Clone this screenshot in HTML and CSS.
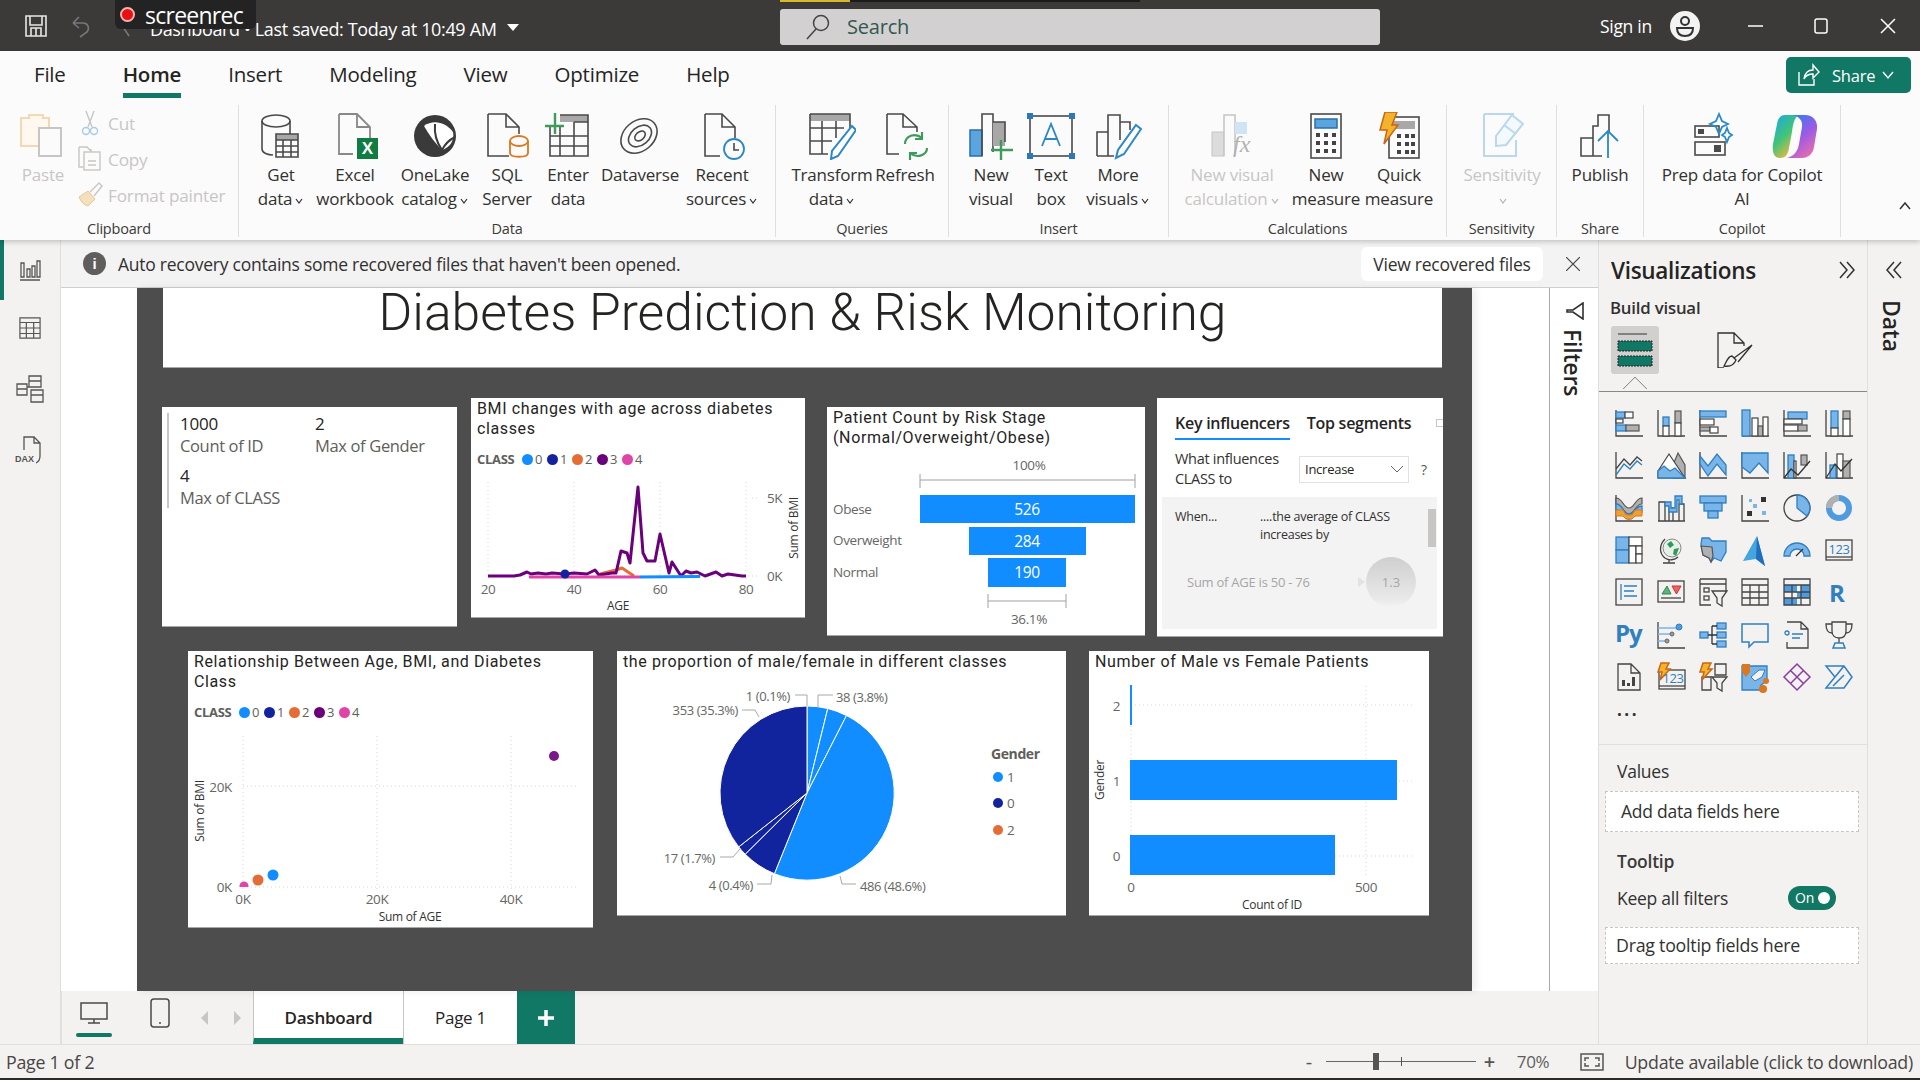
FILE: index.html
```html
<!DOCTYPE html>
<html lang="en">
<head>
<meta charset="utf-8">
<title>Dashboard - Power BI Desktop</title>
<link rel="stylesheet" href="styles.css">
</head>
<body>
<div class="app">
  <header class="titlebar">
    <div class="tb-left">
      <svg class="tb-save" viewBox="0 0 24 24"><path d="M2 2H22V22H2ZM6 2V11H18V2M7 22V14H17V22M12 14V22"/></svg>
      <svg class="tb-undo" viewBox="0 0 20 24"><path d="M2 9L8 3M2 9L8 14M2 9H12C17 9 19 14 16 18L9 23"/></svg>
      <svg class="tb-back" viewBox="0 0 16 24"><path d="M2 4L14 22"/></svg>
      <span class="tb-doc">Dashboard • Last saved: Today at 10:49 AM</span>
      <span class="tb-tri"></span>
    </div>
    <div class="search">
      <svg class="search-ic" viewBox="0 0 26 26"><circle cx="16" cy="9" r="7.5"/><path d="M11 15L2 25"/></svg>
      <span>Search</span>
    </div>
    <div class="tb-right">
      <span class="signin">Sign in</span>
      <svg class="avatar" viewBox="0 0 30 30"><circle class="av-bg" cx="15" cy="15" r="15"/><circle class="av-l" cx="15" cy="10" r="4"/><path class="av-l" d="M7 17H23C23 23 19 25 15 25C11 25 7 23 7 17Z"/></svg>
      <svg class="win-ic win-min" viewBox="0 0 16 16"><path d="M0 8H15"/></svg>
      <svg class="win-ic win-max" viewBox="0 0 16 16"><rect x="2" y="1" width="12" height="14" rx="2"/></svg>
      <svg class="win-ic win-x" viewBox="0 0 16 16"><path d="M1 1L15 15M15 1L1 15"/></svg>
    </div>
    <div class="rec-badge"><span class="rec-dot"></span><span>screenrec</span></div>
    <div class="top-strip"><span class="strip-y"></span><span class="strip-k"></span></div>
  </header>

  <section class="ribbon">
    <nav class="tabs">
      <span class="tab tab-file">File</span>
      <span class="tab tab-on">Home</span>
      <span class="tab">Insert</span>
      <span class="tab">Modeling</span>
      <span class="tab">View</span>
      <span class="tab">Optimize</span>
      <span class="tab">Help</span>
      <button class="share">
        <svg viewBox="0 0 24 24"><path d="M3 9V22H18V16M8 16C9 9 13 7 17 7V2L23 9L17 15V11C13 11 10 12 8 16Z"/></svg>
        <span>Share</span>
        <svg class="share-ch" viewBox="0 0 12 12"><path d="M1 3L6 9L11 3"/></svg>
      </button>
    </nav>
    <div class="groups">
      <div class="group g-clip">
        <div class="btns">
          <div class="rb off w54">
            <svg class="ric" viewBox="0 0 48 48"><path class="pale-o" d="M2 6H10V3H24V6H30V34H2Z"/><rect class="pale-w" x="20" y="16" width="22" height="28"/></svg>
            <span class="rl">Paste</span>
          </div>
          <div class="smalls">
            <div class="sb"><svg viewBox="0 0 26 26"><path class="pale-s" d="M9 1L15 17M17 1L11 17"/><circle class="pale-b" cx="9" cy="21" r="3.5"/><circle class="pale-b" cx="17" cy="21" r="3.5"/></svg><span>Cut</span></div>
            <div class="sb"><svg viewBox="0 0 26 26"><path class="pale-s" d="M2 1H10L14 5V3M2 1V21H6"/><rect class="pale-s" x="7" y="6" width="16" height="18"/><path class="pale-s" d="M11 15H19M11 19H19"/></svg><span>Copy</span></div>
            <div class="sb"><svg viewBox="0 0 26 26"><path class="pale-f" d="M2 15L11 9L18 17L11 24C7 23 4 20 2 15Z"/><path class="pale-s" d="M13 10L22 1L25 4L17 14"/></svg><span>Format painter</span></div>
          </div>
        </div>
        <div class="glabel">Clipboard</div>
      </div>

      <div class="group g-data">
        <div class="btns">
          <div class="rb w72">
            <svg class="ric" viewBox="0 0 48 48"><ellipse class="ln" cx="19" cy="9" rx="14" ry="6"/><path class="ln" d="M5 9V37C5 41 11 43 16 43M33 9V22"/><rect class="gy" x="19" y="22" width="22" height="6"/><path class="ln" d="M19 22H41V45H19ZM19 28H41M19 34H41M19 40H41M26 28V45M34 28V45"/></svg>
            <span class="rl">Get<br>data<svg class="chev" viewBox="0 0 10 10"><path d="M2 3L5 7L8 3"/></svg></span>
          </div>
          <div class="rb w76">
            <svg class="ric" viewBox="0 0 48 48"><path class="ln-g" d="M8 2H26L39 15V28M26 2V15H39M8 2V42H22"/><rect class="xl" x="26" y="26" width="21" height="21"/><text class="xl-t" x="36.500" y="42">X</text></svg>
            <span class="rl">Excel<br>workbook</span>
          </div>
          <div class="rb w84">
            <svg class="ric" viewBox="0 0 48 48"><circle class="dk" cx="24" cy="24" r="21"/><path class="wh" d="M13 14C22 7 35 10 42 20C44 29 38 36 31 38C24 31 18 23 13 14Z"/><path class="dk-l" d="M24 12C23 22 26 31 31 38M31 38C34 32 38 28 44 25"/></svg>
            <span class="rl">OneLake<br>catalog<svg class="chev" viewBox="0 0 10 10"><path d="M2 3L5 7L8 3"/></svg></span>
          </div>
          <div class="rb w60">
            <svg class="ric" viewBox="0 0 48 48"><path class="ln" d="M5 2H23L36 15V22M23 2V15H36M5 2V44H26"/><ellipse class="or" cx="36" cy="29" rx="9" ry="5"/><path class="or" d="M27 29V41C27 46 45 46 45 41V29"/></svg>
            <span class="rl">SQL<br>Server</span>
          </div>
          <div class="rb w62">
            <svg class="ric" viewBox="0 0 48 48"><rect class="gy" x="16" y="3" width="28" height="7"/><path class="ln" d="M6 14V44H44V3H16M6 24H44M6 34H44M16 14V44M30 10V44M30 10H44"/><path class="gr2" d="M1 14H20M11 1V22"/></svg>
            <span class="rl">Enter<br>data</span>
          </div>
          <div class="rb w82">
            <svg class="ric" viewBox="0 0 48 48"><ellipse class="ln" cx="23" cy="24" rx="20" ry="15" transform="rotate(-40 23 24)"/><ellipse class="ln" cx="24" cy="24" rx="13" ry="9" transform="rotate(-40 24 24)"/><ellipse class="ln" cx="24" cy="24" rx="6" ry="4" transform="rotate(-40 24 24)"/></svg>
            <span class="rl">Dataverse</span>
          </div>
          <div class="rb w82">
            <svg class="ric" viewBox="0 0 48 48"><path class="ln" d="M7 2H24L37 15V26M24 2V15H37M7 2V44H22"/><circle class="bl-s" cx="36" cy="37" r="10"/><path class="ln" d="M36 31V38H41"/></svg>
            <span class="rl">Recent<br>sources<svg class="chev" viewBox="0 0 10 10"><path d="M2 3L5 7L8 3"/></svg></span>
          </div>
        </div>
        <div class="glabel">Data</div>
      </div>

      <div class="group g-query">
        <div class="btns">
          <div class="rb w92">
            <svg class="ric" viewBox="0 0 48 48"><rect class="gy" x="2" y="2" width="40" height="7"/><path class="ln" d="M2 2H42V22M2 2V42H20M2 16H36M2 29H24M14 9V42M28 9V26"/><path class="pen" d="M44 14L48 18L30 44L23 47L24 39Z"/></svg>
            <span class="rl">Transform<br>data<svg class="chev" viewBox="0 0 10 10"><path d="M2 3L5 7L8 3"/></svg></span>
          </div>
          <div class="rb w54">
            <svg class="ric" viewBox="0 0 48 48"><path class="ln" d="M6 2H22L36 15V20M22 2V15H36M6 2V42H18"/><path class="gr3" d="M24 32C24 24 34 20 41 26M46 36C46 43 36 47 29 41M41 20V27H34M29 48V41H36"/></svg>
            <span class="rl">Refresh</span>
          </div>
        </div>
        <div class="glabel">Queries</div>
      </div>

      <div class="group g-ins">
        <div class="btns">
          <div class="rb w60">
            <svg class="ric" viewBox="0 0 48 48"><rect class="bl-f" x="3" y="18" width="12" height="26"/><path class="ln" d="M15 44V2H26V40"/><rect class="gy" x="26" y="10" width="12" height="24"/><path class="ln" d="M26 10H38V30"/><path class="gr2" d="M34 28V48M24 38H46"/></svg>
            <span class="rl">New<br>visual</span>
          </div>
          <div class="rb w60">
            <svg class="ric" viewBox="0 0 48 48"><rect class="ln" x="3" y="4" width="42" height="40"/><path class="bl-s2" d="M15 34L24 12L33 34M18 27H30"/><rect class="bl-d" x="0" y="1" width="6" height="6"/><rect class="bl-d" x="42" y="1" width="6" height="6"/><rect class="bl-d" x="0" y="41" width="6" height="6"/><rect class="bl-d" x="42" y="41" width="6" height="6"/></svg>
            <span class="rl">Text<br>box</span>
          </div>
          <div class="rb w74">
            <svg class="ric" viewBox="0 0 48 48"><path class="ln" d="M3 44V20H14M3 44H20M14 44V3H26V28M26 10H36V18"/><path class="pen" d="M42 13L47 17L30 42L22 46L24 38Z"/></svg>
            <span class="rl">More<br>visuals<svg class="chev" viewBox="0 0 10 10"><path d="M2 3L5 7L8 3"/></svg></span>
          </div>
        </div>
        <div class="glabel">Insert</div>
      </div>

      <div class="group g-calc">
        <div class="btns">
          <div class="rb off w110">
            <svg class="ric" viewBox="0 0 48 48"><rect class="pg" x="4" y="20" width="12" height="24"/><path class="pg-l" d="M16 44V3H27V44"/><rect class="pb" x="27" y="10" width="12" height="12"/><text class="fx" x="25" y="40">fx</text></svg>
            <span class="rl">New visual<br>calculation<svg class="chev" viewBox="0 0 10 10"><path d="M2 3L5 7L8 3"/></svg></span>
          </div>
          <div class="rb w78">
            <svg class="ric" viewBox="0 0 48 48"><rect class="ln" x="9" y="2" width="30" height="44"/><rect class="bl-f" x="13" y="7" width="22" height="9"/><path class="dots" d="M14 23H18M22 23H26M30 23H34M14 31H18M22 31H26M30 31H34M14 39H18M22 39H26M30 39H34"/></svg>
            <span class="rl">New<br>measure</span>
          </div>
          <div class="rb w68">
            <svg class="ric" viewBox="0 0 48 48"><rect class="ln" x="14" y="5" width="30" height="41"/><rect class="gy" x="18" y="9" width="22" height="8"/><path class="dots" d="M22 24H26M30 24H34M36 24H40M22 32H26M30 32H34M36 32H40M22 40H26M30 40H34M36 40H40"/><path class="bolt" d="M10 0H22L17 13H23L9 32L12 18H5Z"/></svg>
            <span class="rl">Quick<br>measure</span>
          </div>
        </div>
        <div class="glabel">Calculations</div>
      </div>

      <div class="group g-sens">
        <div class="btns">
          <div class="rb off w110">
            <svg class="ric" viewBox="0 0 48 48"><path class="pb-l" d="M6 2H36M6 2V44H38V28"/><path class="pb-l2" d="M18 24L34 3L45 12L28 33L18 34Z"/><path class="pb-l" d="M26 13L38 22"/></svg>
            <span class="rl">Sensitivity<br><svg class="chev" viewBox="0 0 10 10"><path d="M2 3L5 7L8 3"/></svg></span>
          </div>
        </div>
        <div class="glabel">Sensitivity</div>
      </div>

      <div class="group g-share">
        <div class="btns">
          <div class="rb w86">
            <svg class="ric" viewBox="0 0 48 48"><path class="ln" d="M5 44V26H17V44ZM17 26V14H22V3H33V20M5 44H26"/><path class="bl-s2" d="M32 46V20M22 29L32 19L42 29"/></svg>
            <span class="rl">Publish</span>
          </div>
        </div>
        <div class="glabel">Share</div>
      </div>

      <div class="group g-cop">
        <div class="btns">
          <div class="rb w196">
            <div class="pair">
              <svg class="ric" viewBox="0 0 48 48"><rect class="ln" x="8" y="14" width="24" height="11"/><rect class="dkf" x="11" y="17" width="6" height="5"/><path class="bl-s" d="M32 2L35 9L41 12L35 15L32 22L29 15L23 12L29 9Z"/><path class="bl-s" d="M40 16L42 21L45 23L42 25L40 30L38 25L35 23L38 21Z"/><rect class="ln" x="8" y="30" width="30" height="13"/><rect class="dkf" x="27" y="33" width="7" height="7"/></svg>
              <svg class="ric" viewBox="0 0 48 48">
                <defs>
                  <linearGradient id="cop1" x1="0" y1="0" x2=".6" y2="1"><stop offset="0" stop-color="#19a8e8"/><stop offset=".55" stop-color="#3fc47a"/><stop offset="1" stop-color="#f2b93a"/></linearGradient>
                  <linearGradient id="cop2" x1=".2" y1="0" x2=".8" y2="1"><stop offset="0" stop-color="#2f7df0"/><stop offset=".5" stop-color="#9a5be6"/><stop offset="1" stop-color="#ef6fa6"/></linearGradient>
                </defs>
                <path fill="url(#cop1)" d="M14 3H28C23 6 22 12 21 20L18 36C17 43 14 46 9 46C3 46 1 40 2 32L6 12C7 6 10 3 14 3Z"/>
                <path fill="url(#cop2)" d="M22 3H34C42 3 47 9 46 17L43 35C42 42 37 46 31 46H16C24 44 27 38 28 32L31 15C32 9 28 4 22 3Z"/>
              </svg>
            </div>
            <span class="rl">Prep data for Copilot<br>AI</span>
          </div>
        </div>
        <div class="glabel">Copilot</div>
      </div>
      <svg class="collapse" viewBox="0 0 12 8"><path d="M1 7L6 1L11 7"/></svg>
    </div>
  </section>

  <main class="body">
    <aside class="rail">
      <span class="rail-on"></span>
      <svg class="rail-i" viewBox="0 0 22 22"><path d="M1 21H21M2 4H5V18H2ZM8 10H11V18H8ZM13 7H16V18H13ZM18 2H21V18H18Z"/></svg>
      <svg class="rail-i" viewBox="0 0 24 24"><path d="M1 1H23V23H1ZM1 6H23M1 12H23M1 18H23M8 6V23M16 6V23"/></svg>
      <svg class="rail-i rail-m" viewBox="0 0 28 28"><path d="M13 1H25V12H13ZM13 6H25M15 15H27V27H15ZM15 20H27M1 9H11V20H1ZM1 14H11M11 12H15"/></svg>
      <div class="rail-dax">
        <svg class="rail-i" viewBox="0 0 28 28"><path d="M8 14V1H18L24 7V20C24 24 22 26 20 27M18 1V7H24"/></svg>
        <span>DAX</span>
      </div>
    </aside>

    <div class="center">
      <div class="notice">
        <span class="info">i</span>
        <span class="notice-t">Auto recovery contains some recovered files that haven't been opened.</span>
        <button class="view-btn">View recovered files</button>
        <svg class="notice-x" viewBox="0 0 14 14"><path d="M0 0L14 14M14 0L0 14"/></svg>
      </div>
      <div class="work">
        <div class="canvas">
          <div class="page">
            <div class="visual v-head"><h1>Diabetes Prediction &amp; Risk Monitoring</h1></div>

            <div class="visual v-kpi">
              <div class="kpi">
                <div><div class="kv">1000</div><div class="kl">Count of ID</div></div>
                <div><div class="kv">2</div><div class="kl">Max of Gender</div></div>
                <div><div class="kv">4</div><div class="kl">Max of CLASS</div></div>
              </div>
            </div>

            <div class="visual v-bmi">
              <div class="vtitle">BMI changes with age across diabetes classes</div>
              <div class="legend"><b>CLASS</b><span class="li"><i class="c0"></i>0</span><span class="li"><i class="c1"></i>1</span><span class="li"><i class="c2"></i>2</span><span class="li"><i class="c3"></i>3</span><span class="li"><i class="c4"></i>4</span></div>
              <svg class="plot" width="334" height="149" viewBox="471 468 334 149">
                <path class="grid" d="M488 482V580M574 482V580M660 482V580M746 482V580M488 576H760M752 498H760"/>
                <path class="ser s-o" d="M600 574L616 570L622 568L634 576"/>
                <path class="ser s-v" d="M488 576H514L520 575L527 572L531 574L538 573L546 574L552 573L565 574L574 573L587 574L595 570L599 575L612 573L616 573L621 551L627 553L630 563L638 487L643 553L647 561L655 561L660 534L669 573L672 562L681 576L686 571L691 573L697 572L705 576L716 572L722 576L728 574L742 576H746"/>
                <path class="ser s-p" d="M529 577H640"/>
                <path class="ser s-b" d="M640 577L700 576.500"/>
                <circle class="d1" cx="565" cy="574" r="4.500"/>
                <text class="ax mid" x="488" y="594">20</text><text class="ax mid" x="574" y="594">40</text><text class="ax mid" x="660" y="594">60</text><text class="ax mid" x="746" y="594">80</text>
                <text class="ax" x="767" y="503">5K</text><text class="ax" x="767" y="581">0K</text>
                <text class="axt mid" x="618" y="610">AGE</text>
                <text class="axt mid" transform="translate(798 528) rotate(-90)">Sum of BMI</text>
              </svg>
            </div>

            <div class="visual v-fun">
              <div class="vtitle">Patient Count by Risk Stage (Normal/Overweight/Obese)</div>
              <svg class="plot" width="318" height="187" viewBox="827 448 318 187">
                <text class="ax mid" x="1029" y="470">100%</text>
                <path class="brk" d="M920 474V488M920 480H1135M1135 474V488M988 594V608M988 601H1066M1066 594V608"/>
                <rect class="bar" x="920" y="495" width="215" height="28"/>
                <rect class="bar" x="969" y="527" width="117" height="28"/>
                <rect class="bar" x="988" y="558" width="78" height="29"/>
                <text class="ax" x="833" y="514">Obese</text><text class="ax" x="833" y="545">Overweight</text><text class="ax" x="833" y="577">Normal</text>
                <text class="val mid" x="1027" y="515">526</text><text class="val mid" x="1027" y="547">284</text><text class="val mid" x="1027" y="578">190</text>
                <text class="ax mid" x="1029" y="624">36.1%</text>
              </svg>
            </div>

            <div class="visual v-ki">
              <div class="ki-tabs"><span class="ki-tab ki-on">Key influencers</span><span class="ki-tab">Top segments</span></div>
              <span class="ki-corner"></span>
              <div class="ki-q">
                <span class="ki-qt">What influences CLASS to</span>
                <span class="ki-sel"><span>Increase</span><svg viewBox="0 0 12 8"><path d="M0 1L6 7L12 1"/></svg></span>
                <span class="ki-help">?</span>
              </div>
              <div class="ki-panel">
                <div class="ki-hdr"><span class="ki-when">When...</span><span class="ki-then">....the average of CLASS increases by</span></div>
                <div class="ki-row"><span class="ki-sum">Sum of AGE is 50 - 76</span><span class="ki-arrow"></span><span class="ki-bub">1.3</span></div>
                <span class="ki-scroll"></span>
              </div>
            </div>

            <div class="visual v-sca">
              <div class="vtitle">Relationship Between Age, BMI, and Diabetes Class</div>
              <div class="legend"><b>CLASS</b><span class="li"><i class="c0"></i>0</span><span class="li"><i class="c1"></i>1</span><span class="li"><i class="c2"></i>2</span><span class="li"><i class="c3"></i>3</span><span class="li"><i class="c4"></i>4</span></div>
              <svg class="plot" width="405" height="206" viewBox="188 721 405 206">
                <path class="grid" d="M243 736V890M377 736V890M511 736V890M243 786H578M243 887H578"/>
                <clipPath id="scaclip"><rect x="188" y="721" width="405" height="166"/></clipPath>
                <circle class="d-v" cx="554" cy="756" r="5"/>
                <circle class="d0" cx="273" cy="875" r="5.500"/>
                <circle class="d2" cx="258" cy="880" r="5.500"/>
                <circle class="d4" cx="244" cy="886" r="4.500" clip-path="url(#scaclip)"/>
                <text class="ax end" x="232" y="792">20K</text><text class="ax end" x="232" y="892">0K</text>
                <text class="ax mid" x="243" y="904">0K</text><text class="ax mid" x="377" y="904">20K</text><text class="ax mid" x="511" y="904">40K</text>
                <text class="axt mid" x="410" y="921">Sum of AGE</text>
                <text class="axt mid" transform="translate(204 811) rotate(-90)">Sum of BMI</text>
              </svg>
            </div>

            <div class="visual v-pie">
              <div class="vtitle">the proportion of male/female in different classes</div>
              <svg class="plot" width="449" height="243" viewBox="617 672 449 243">
                <path class="sl-b" d="M807 793L807 706A87 87 0 0 1 827.750 708.500Z"/>
                <path class="sl-b" d="M807 793L827.750 708.500A87 87 0 0 1 846.500 715.500Z"/>
                <path class="sl-b" d="M807 793L846.500 715.500A87 87 0 0 1 774.400 873.700Z"/>
                <path class="sl-n" d="M807 793L774.400 873.700A87 87 0 0 1 745.200 854.200Z"/>
                <path class="sl-n" d="M807 793L745.200 854.200A87 87 0 0 1 738.700 846.900Z"/>
                <path class="sl-n" d="M807 793L738.700 846.900A87 87 0 0 1 807 706Z"/>
                <path class="lead" d="M795 695H807V706M833 695H818V708M742 710H755L759 717M720 857H733L740 849M757 884H771L772 875M856 884H842L840 876"/>
                <text class="ax pl end" x="790" y="701">1 (0.1%)</text>
                <text class="ax pl" x="836" y="702">38 (3.8%)</text>
                <text class="ax pl end" x="738" y="715">353 (35.3%)</text>
                <text class="ax pl end" x="715" y="863">17 (1.7%)</text>
                <text class="ax pl end" x="753" y="890">4 (0.4%)</text>
                <text class="ax pl" x="860" y="891">486 (48.6%)</text>
                <text class="lgt" x="991" y="759">Gender</text>
                <circle class="d0" cx="998" cy="777" r="5"/><text class="ax" x="1007" y="782">1</text>
                <circle class="d1" cx="998" cy="803" r="5"/><text class="ax" x="1007" y="808">0</text>
                <circle class="d2" cx="998" cy="830" r="5"/><text class="ax" x="1007" y="835">2</text>
              </svg>
            </div>

            <div class="visual v-bar">
              <div class="vtitle">Number of Male vs Female Patients</div>
              <svg class="plot" width="340" height="243" viewBox="1089 672 340 243">
                <path class="grid" d="M1131 686V875M1366 686V875M1131 705H1413M1131 781H1413M1131 856H1413"/>
                <rect class="bar" x="1130" y="685" width="2" height="40"/>
                <rect class="bar" x="1130" y="760" width="267" height="40"/>
                <rect class="bar" x="1130" y="835" width="205" height="40"/>
                <text class="ax end" x="1120" y="711">2</text><text class="ax end" x="1120" y="786">1</text><text class="ax end" x="1120" y="861">0</text>
                <text class="ax mid" x="1131" y="892">0</text><text class="ax mid" x="1366" y="892">500</text>
                <text class="axt mid" x="1272" y="909">Count of ID</text>
                <text class="axt mid" transform="translate(1104 780) rotate(-90)">Gender</text>
              </svg>
            </div>
          </div>
        </div>
        <aside class="filters">
          <svg class="filter-ic" viewBox="0 0 18 18"><path d="M17 1V17L7 10H1V8H7Z"/></svg>
          <span class="vert">Filters</span>
        </aside>
      </div>
      <div class="pagetabs">
        <div class="pv pv-desk"><svg viewBox="0 0 28 22"><path d="M1 1H27V17H1ZM14 17V21M8 21H20"/></svg></div>
        <div class="pv pv-phone"><svg viewBox="0 0 20 30"><rect x="1" y="1" width="18" height="28" rx="3"/><path d="M9 25H11"/></svg></div>
        <span class="tri-l"></span><span class="tri-r"></span>
        <div class="ptab ptab-on">Dashboard</div>
        <div class="ptab ptab-2">Page 1</div>
        <div class="ptab-add"><svg viewBox="0 0 16 16"><path d="M8 0V16M0 8H16"/></svg></div>
      </div>
    </div>

    <aside class="viz">
      <div class="viz-h"><span>Visualizations</span><svg viewBox="0 0 18 18"><path d="M2 1L9 9L2 17M9 1L16 9L9 17"/></svg></div>
      <div class="viz-sub">Build visual</div>
      <div class="viz-tabs">
        <div class="viz-tab-on"><svg viewBox="0 0 36 36"><path class="vt-l" d="M1 2H30"/><rect class="vt-g" x="1" y="9" width="34" height="10"/><rect class="vt-g" x="1" y="24" width="34" height="10"/></svg></div>
        <svg class="viz-fmt" viewBox="0 0 38 36"><path d="M8 36H2V1H18L28 11V14M18 1V11H28M8 34C14 35 18 33 20 28L16 24C12 24 11 29 8 34ZM18 26L36 13L22 30"/></svg>
      </div>
      <span class="viz-caret"></span>
      <div class="viz-grid">
        <svg viewBox="0 0 28 28"><path class="a" d="M1 1V27H28"/><rect class="b" x="1" y="3" width="9" height="6"/><rect class="w" x="10" y="3" width="8" height="6"/><rect class="w" x="1" y="10" width="7" height="4"/><rect class="b" x="1" y="16" width="10" height="6"/><rect class="g" x="11" y="16" width="13" height="6"/></svg>
        <svg viewBox="0 0 28 28"><path class="a" d="M1 1V27H28"/><rect class="b" x="6" y="8" width="6" height="9"/><rect class="w" x="6" y="17" width="6" height="10"/><rect class="g" x="18" y="2" width="6" height="12"/><rect class="w" x="18" y="14" width="6" height="13"/></svg>
        <svg viewBox="0 0 28 28"><path class="a" d="M1 27H28M1 1V27"/><rect class="b" x="1" y="2" width="26" height="6"/><rect class="w" x="1" y="10" width="14" height="6"/><rect class="g" x="1" y="18" width="10" height="4"/><rect class="w" x="11" y="18" width="8" height="6"/></svg>
        <svg viewBox="0 0 28 28"><path class="a" d="M1 27H28"/><rect class="b" x="1" y="1" width="8" height="26"/><rect class="w" x="11" y="9" width="6" height="18"/><rect class="g" x="17" y="17" width="5" height="10"/><rect class="w" x="22" y="8" width="5" height="19"/></svg>
        <svg viewBox="0 0 28 28"><path class="a" d="M1 1V27H28"/><rect class="b" x="5" y="3" width="19" height="7"/><rect class="w" x="1" y="10" width="18" height="5"/><rect class="w" x="1" y="16" width="14" height="6"/><rect class="g" x="15" y="16" width="9" height="6"/></svg>
        <svg viewBox="0 0 28 28"><path class="a" d="M1 1V27H28"/><rect class="b" x="6" y="2" width="7" height="17"/><rect class="w" x="6" y="19" width="7" height="8"/><rect class="g" x="18" y="2" width="7" height="8"/><rect class="w" x="18" y="10" width="7" height="17"/></svg>

        <svg viewBox="0 0 28 28"><path class="a" d="M1 1V27H28"/><path class="l" d="M1 18L9 8L15 14L22 6L27 10"/><path class="lb" d="M1 24L9 13L15 18L22 10L27 14"/></svg>
        <svg viewBox="0 0 28 28"><path class="g" d="M16 14L21 2L28 14V27H16Z"/><path class="w" d="M1 20L12 3L22 18L28 27H1Z"/><path class="b" d="M1 20L7 15L13 20L18 17L28 27H1Z"/></svg>
        <svg viewBox="0 0 28 28"><path class="a" d="M1 1V27H28"/><path class="b" d="M1 5L9 15L18 3L27 14V24L18 13L9 25L1 13Z"/></svg>
        <svg viewBox="0 0 28 28"><path class="a" d="M1 1V27H28"/><path class="b" d="M1 2H27V22L18 12L9 22L1 16Z"/></svg>
        <svg viewBox="0 0 28 28"><path class="a" d="M1 1V27H28"/><rect class="b" x="5" y="4" width="6" height="23"/><rect class="w" x="11" y="10" width="2" height="17"/><rect class="g" x="18" y="4" width="6" height="10"/><path class="a2" d="M1 27L8 18L15 24L27 10"/></svg>
        <svg viewBox="0 0 28 28"><path class="a" d="M1 1V27H28"/><rect class="b" x="5" y="14" width="6" height="13"/><rect class="w" x="12" y="3" width="6" height="24"/><rect class="g" x="18" y="10" width="7" height="17"/><path class="a2" d="M1 27L10 13L16 20L27 8"/></svg>

        <svg viewBox="0 0 28 28"><path class="a" d="M1 1V27H28"/><path class="g" d="M1 4C8 4 8 14 14 14C20 14 20 4 27 4V10C20 10 20 20 14 20C8 20 8 10 1 10Z"/><path class="b" d="M1 10C8 10 8 20 14 20C20 20 20 12 27 12V18C20 18 20 25 14 25C8 25 8 16 1 16Z"/><path class="o" d="M1 16H8L11 21H17L20 16H27V22H20L17 25H11L8 22H1Z"/></svg>
        <svg viewBox="0 0 28 28"><path class="a" d="M1 27H28M2 27V8H8V27M12 27V14H16V27M22 27V10H27V27"/><path class="b" d="M8 8H14V14H18V2H25V10H22V6H20V18H12V12H8Z"/></svg>
        <svg viewBox="0 0 28 28"><rect class="b" x="1" y="2" width="26" height="7"/><rect class="b" x="5" y="9" width="18" height="8"/><rect class="b" x="9" y="17" width="10" height="7"/></svg>
        <svg viewBox="0 0 28 28"><path class="a" d="M1 1V27H28"/><rect class="k" x="20" y="3" width="5" height="5"/><rect class="bf" x="8" y="5" width="3" height="3"/><rect class="bf" x="12" y="10" width="4" height="4"/><rect class="bf" x="21" y="17" width="4" height="4"/><rect class="k" x="6" y="17" width="5" height="5"/></svg>
        <svg viewBox="0 0 28 28"><circle class="l" cx="14" cy="14" r="13"/><path class="b" d="M14 1A13 13 0 0 1 24 22L14 14Z"/></svg>
        <svg viewBox="0 0 28 28"><circle class="don" cx="14" cy="14" r="10"/><path class="don-g" d="M4 14A10 10 0 0 1 14 4"/></svg>

        <svg viewBox="0 0 28 28"><rect class="b" x="1" y="1" width="13" height="13"/><rect class="b" x="1" y="14" width="13" height="13"/><rect class="w" x="14" y="1" width="13" height="9"/><rect class="w" x="14" y="10" width="7" height="17"/><rect class="w" x="21" y="10" width="6" height="8"/><rect class="w" x="21" y="18" width="6" height="9"/></svg>
        <svg viewBox="0 0 28 28"><circle class="glb" cx="15" cy="12" r="9"/><path class="grn" d="M10 8L14 5L17 9L13 12ZM17 13L22 12L19 20L16 18Z"/><path class="l" d="M8 3C2 9 2 17 8 22C12 25 18 24 21 21M12 24V27M6 27H18"/></svg>
        <svg viewBox="0 0 28 28"><path class="b" d="M3 2H10L13 5H27V16L22 25L15 22L12 26L10 22L4 19L2 8Z"/><path class="g" d="M2 10L13 11L14 20L12 26L10 22L4 19Z"/></svg>
        <svg viewBox="0 0 28 28"><path class="nav" d="M16 0L24 30L15 23L2 25Z"/><path class="nav2" d="M16 0L24 30L15 23Z"/></svg>
        <svg viewBox="0 0 28 28"><path class="b" d="M1 20A13 13 0 0 1 27 20H21A7 7 0 0 0 7 20Z"/><path class="a2" d="M13 20L20 13"/></svg>
        <svg viewBox="0 0 28 28"><rect class="l" x="1" y="4" width="26" height="20"/><path class="l" d="M1 21H27"/><text class="tb" x="14" y="18">123</text></svg>

        <svg viewBox="0 0 28 28"><rect class="l" x="1" y="1" width="26" height="26"/><path class="lb" d="M6 6V22M9 8H22M9 13H19M9 18H22"/></svg>
        <svg viewBox="0 0 28 28"><rect class="l" x="1" y="3" width="26" height="21"/><path class="l" d="M4 20H24"/><path class="tg" d="M5 16L10 8L14 16Z"/><path class="tr" d="M15 8H24L19.500 16Z"/></svg>
        <svg viewBox="0 0 28 28"><path class="l" d="M1 1H27V14M1 6H27M1 1V27H12"/><rect class="l" x="5" y="10" width="5" height="4"/><rect class="l" x="5" y="18" width="5" height="4"/><path class="l" d="M13 13H28L23 20V28L18 25V20Z"/></svg>
        <svg viewBox="0 0 28 28"><path class="l" d="M1 1H27V27H1ZM1 7H27M1 14H27M1 20H27M9 7V27M18 7V27"/></svg>
        <svg viewBox="0 0 28 28"><path class="b2" d="M1 7H14V14H1ZM14 14H27V20H14ZM1 20H14V27H1ZM18 7H27V14H18Z"/><path class="l" d="M1 1H27V27H1ZM1 7H27M1 14H27M1 20H27M9 7V27M18 7V27"/></svg>
        <svg viewBox="0 0 28 28"><text class="rt" x="12" y="24">R</text></svg>

        <svg viewBox="0 0 28 28"><text class="py" x="0" y="21">Py</text></svg>
        <svg viewBox="0 0 28 28"><path class="a" d="M1 1V27H28"/><path class="bf2" d="M1 7H19M1 13H13M1 20H8"/><circle class="bdot" cx="22" cy="6" r="3"/><circle class="gdot" cx="15" cy="13" r="2"/><circle class="gdot" cx="10" cy="20" r="2"/></svg>
        <svg viewBox="0 0 28 28"><rect class="b" x="1" y="11" width="8" height="6"/><rect class="b" x="18" y="2" width="9" height="6"/><rect class="b" x="18" y="11" width="9" height="6"/><rect class="b" x="18" y="20" width="9" height="6"/><path class="a2" d="M9 14H18M13 5V23M13 5H18M13 23H18"/></svg>
        <svg viewBox="0 0 28 28"><path class="cb" d="M1 3H27V21H13L8 26V21H1Z"/></svg>
        <svg viewBox="0 0 28 28"><path class="l" d="M4 1H18L25 8V27H4V21M18 1V8H25"/><circle class="lb" cx="4" cy="12" r="2"/><path class="lb" d="M9 13H20M9 17H17"/></svg>
        <svg viewBox="0 0 28 28"><path class="l" d="M7 1H21V10C21 15 18 17 14 17C10 17 7 15 7 10ZM7 3H1C1 9 3 12 7 12M21 3H27C27 9 25 12 21 12M14 17V22"/><path class="cb" d="M8 27L10 22H18L20 27Z"/></svg>

        <svg viewBox="0 0 28 28"><path class="l" d="M3 1H16L25 10V27H3ZM16 1V10H25"/><path class="kb" d="M7 17H10V23H7ZM12 20H15V23H12ZM17 14H20V23H17Z"/></svg>
        <svg viewBox="0 0 28 28"><rect class="l" x="2" y="7" width="26" height="19"/><path class="l" d="M2 23H28"/><text class="tb" x="16" y="20">123</text><path class="bolt" d="M4 0H12L9 6H13L3 17L5 9H1Z"/></svg>
        <svg viewBox="0 0 28 28"><path class="l" d="M3 14H12V27H3ZM16 1H27V12H16Z"/><path class="l" d="M13 14H28L23 20V28L18 25V20Z"/><path class="bolt" d="M4 0H12L9 6H13L3 17L5 9H1Z"/></svg>
        <svg viewBox="0 0 28 28"><path class="b" d="M1 3H26V18L20 22V27H1Z"/><path class="wf" d="M10 14L18 7H24L21 14L14 18Z"/><path class="mp" d="M1 1H9V9L5 14L1 9Z"/><circle class="mpd" cx="25" cy="18" r="3"/><circle class="mpd" cx="22" cy="26" r="4"/></svg>
        <svg viewBox="0 0 28 28"><path class="pu" d="M14 1L27 14L14 27L1 14ZM8 8L20 20M20 8L8 20"/></svg>
        <svg viewBox="0 0 28 28"><path class="cb" d="M1 3H19L27 14L19 25H1L10 14ZM10 14L19 3M8 23L19 12"/></svg>
      </div>
      <div class="viz-more">...</div>
      <div class="wells">
        <div class="well-l">Values</div>
        <div class="well">Add data fields here</div>
        <div class="well-h">Tooltip</div>
        <div class="keep"><span>Keep all filters</span><span class="toggle"><span>On</span><i></i></span></div>
        <div class="well well-2">Drag tooltip fields here</div>
      </div>
    </aside>

    <aside class="datap">
      <svg viewBox="0 0 18 18"><path d="M9 1L2 9L9 17M16 1L9 9L16 17"/></svg>
      <span class="vert">Data</span>
    </aside>
  </main>

  <footer class="status">
    <span class="st-page">Page 1 of 2</span>
    <div class="st-right">
      <span class="st-sym">-</span>
      <span class="slider"><i class="thumb"></i><i class="tick"></i></span>
      <span class="st-sym st-plus">+</span>
      <span class="st-zoom">70%</span>
      <svg class="st-fit" viewBox="0 0 24 18"><path class="fit-o" d="M1 1H23V17H1Z"/><path class="fit-i" d="M9 5H5V8M15 5H19V8M5 10V13H9M19 10V13H15"/></svg>
      <span class="st-up">Update available (click to download)</span>
    </div>
  </footer>
  <div class="task-strip"></div>
</div>
</body>
</html>
```

FILE: styles.css
```css
* { box-sizing: border-box; }
html, body { margin: 0; padding: 0; background: #f3f2f1; }
body { font-family: "Open Sans", "Noto Sans", sans-serif; color: #252423; }
svg { display: block; flex: none; }
button { font: inherit; border: 0; padding: 0; }
.app { position: relative; width: 1920px; height: 1080px; overflow: hidden; display: flex; flex-direction: column; }

/* Title bar */
.titlebar { position: relative; height: 51px; flex: none; background: #3b3a39; color: #fff; display: grid; grid-template-columns: 780px 600px 1fr; align-items: center; }
.tb-left { display: flex; align-items: center; padding-left: 24px; height: 100%; }
.tb-save { width: 24px; height: 24px; fill: none; stroke: #e6e6e6; stroke-width: 1.6; }
.tb-undo { width: 20px; height: 24px; margin-left: 23px; fill: none; stroke: #77767a; stroke-width: 1.6; }
.tb-back { width: 16px; height: 24px; margin-left: 24px; fill: none; stroke: #77767a; stroke-width: 1.6; }
.tb-doc { margin-left: 19px; font-size: 18px; letter-spacing: -.35px; white-space: nowrap; padding-top: 6px; }
.tb-tri { width: 0; height: 0; margin: 4px 0 0 10px; border-left: 6px solid transparent; border-right: 6px solid transparent; border-top: 7px solid #fff; }
.search { height: 36px; background: #d2d0d0; border-radius: 3px; display: flex; align-items: center; padding-left: 25px; color: #33594f; font-size: 20px; letter-spacing: -.2px; margin-top: 2px; }
.search-ic { width: 26px; height: 26px; margin-right: 16px; fill: none; stroke: #444; stroke-width: 1.5; }
.tb-right { display: flex; align-items: center; padding-left: 220px; height: 100%; }
.signin { font-size: 17.500px; letter-spacing: -.3px; white-space: nowrap; width: 70px; }
.avatar { width: 30px; height: 30px; }
.av-bg { fill: #f3f3f3; }
.av-l { fill: none; stroke: #333; stroke-width: 2; }
.win-ic { width: 16px; height: 16px; fill: none; stroke: #fff; stroke-width: 1.500; }
.win-min { margin-left: 48px; }
.win-max { margin-left: 49px; }
.win-x { margin-left: 51px; }
.rec-badge { position: absolute; left: 115px; top: 0; width: 141px; height: 29px; background: #232323; border-radius: 0 0 6px 6px; display: flex; align-items: center; font-size: 23px; letter-spacing: -.75px; color: #fff; padding-left: 5px; }
.rec-dot { width: 15px; height: 15px; border-radius: 50%; background: #e81010; border: 2px solid #f3b3b3; margin-right: 10px; }
.top-strip { position: absolute; left: 780px; top: 0; display: flex; height: 2px; }
.strip-y { width: 70px; background: #d7b92a; }
.strip-k { width: 290px; background: #1b1b1b; }

/* Ribbon */
.ribbon { position: relative; z-index: 3; height: 189px; flex: none; background: #fbfbfb; box-shadow: 0 2px 5px rgba(0,0,0,.2); }
.tabs { display: flex; align-items: flex-start; height: 54px; padding: 0 9px 0 34px; gap: 47px; font-size: 20.500px; letter-spacing: -.2px; }
.tab { height: 47px; line-height: 47px; white-space: nowrap; padding-bottom: 0; }
.tab-file { margin-right: 10px; }
.tab-on { font-weight: 600; border-bottom: 5px solid #117865; margin-top: 0; }
.share { margin-left: auto; margin-top: 6px; width: 125px; height: 36px; background: #117865; color: #fff; border-radius: 5px; display: flex; align-items: center; padding-left: 10px; font-size: 16.500px; letter-spacing: -.2px; }
.share svg { width: 24px; height: 24px; fill: none; stroke: #fff; stroke-width: 1.4; margin-right: 12px; }
.share .share-ch { width: 12px; height: 12px; margin: 0 0 0 7px; }
.groups { display: flex; height: 132px; position: relative; }
.group { display: flex; flex-direction: column; border-right: 1px solid #e1dfdd; flex: none; }
.btns { height: 115px; display: flex; flex: none; }
.glabel { text-align: center; font-size: 14.500px; line-height: 17px; color: #3b3a39; letter-spacing: -.2px; }
.g-clip { width: 239px; }
.g-clip .btns { padding-left: 16px; }
.g-data { width: 537px; }
.g-data .btns { padding-left: 6px; }
.g-query { width: 173px; }
.g-query .btns { padding-left: 10px; }
.g-ins { width: 220px; }
.g-ins .btns { padding-left: 12px; }
.g-calc { width: 278px; }
.g-calc .btns { padding-left: 8px; }
.g-sens { width: 110px; }
.g-share { width: 87px; }
.g-cop { width: 197px; }
.rb { display: flex; flex-direction: column; align-items: center; padding-top: 7px; flex: none; }
.ric { width: 48px; height: 48px; }
.rl { display: block; margin-top: 3px; text-align: center; font-size: 17px; line-height: 24px; letter-spacing: -.2px; white-space: nowrap; color: #323130; }
.off .rl, .sb span { color: #c8c6c4; }
.chev { display: inline-block; width: 10px; height: 10px; margin-left: 2px; fill: none; stroke: #323130; stroke-width: 1.200; vertical-align: -1px; }
.off .chev { stroke: #b5b3b1; }
.w54 { width: 54px; } .w60 { width: 60px; } .w62 { width: 62px; } .w68 { width: 68px; } .w72 { width: 72px; }
.w74 { width: 74px; } .w76 { width: 76px; } .w78 { width: 78px; } .w82 { width: 82px; } .w84 { width: 84px; }
.w86 { width: 86px; } .w92 { width: 92px; } .w110 { width: 110px; } .w196 { width: 196px; }
.pair { display: flex; gap: 36px; margin-left: 22px; }
.smalls { margin-left: 7px; }
.sb { height: 36px; display: flex; align-items: center; gap: 5px; font-size: 17.200px; letter-spacing: -.2px; white-space: nowrap; }
.sb svg { width: 26px; height: 26px; }
.collapse { position: absolute; right: 9px; top: 97px; width: 12px; height: 8px; fill: none; stroke: #323130; stroke-width: 1.500; }

/* ribbon icon paints */
.ln { fill: none; stroke: #4a4a4a; stroke-width: 1.600; }
.ln-g { fill: none; stroke: #8a8886; stroke-width: 1.800; }
.gy { fill: #a8a8a8; }
.xl { fill: #107c41; }
.xl-t { fill: #fff; font: 700 17px "Liberation Sans", sans-serif; text-anchor: middle; }
.dk { fill: #3a3a3a; }
.dk-l { fill: none; stroke: #3a3a3a; stroke-width: 2; }
.dkf { fill: #4a4a4a; }
.wh { fill: #fff; }
.or { fill: none; stroke: #d9781f; stroke-width: 1.800; }
.gr2 { fill: none; stroke: #3f9a5c; stroke-width: 2.400; }
.gr3 { fill: none; stroke: #3f9a5c; stroke-width: 2.200; }
.bl-s { fill: none; stroke: #2b88c8; stroke-width: 1.800; }
.bl-s2 { fill: none; stroke: #2b88c8; stroke-width: 1.800; }
.bl-f { fill: #5aa5e0; stroke: #2b6fa8; stroke-width: 1.500; }
.bl-d { fill: #2b78c0; }
.pen { fill: #fff; stroke: #2b88c8; stroke-width: 2; }
.dots { fill: none; stroke: #444; stroke-width: 4; }
.bolt { fill: #f3b32a; stroke: #c9661a; stroke-width: 1.500; }
.pale-o { fill: #fff8ee; stroke: #f2d9b4; stroke-width: 2; }
.pale-w { fill: #fbfbfb; stroke: #c8c6c4; stroke-width: 2; }
.pale-s { fill: none; stroke: #c8c6c4; stroke-width: 1.400; }
.pale-b { fill: none; stroke: #a9cbe4; stroke-width: 1.400; }
.pale-f { fill: #f6dfbd; stroke: #e5c79c; stroke-width: 1; }
.pg { fill: #dcdcdc; stroke: #c8c6c4; }
.pg-l { fill: #fbfbfb; stroke: #c8c6c4; stroke-width: 1.600; }
.pb { fill: #cfe4f5; }
.fx { font: italic 24px "Liberation Serif", serif; fill: #b4b2b0; }
.pb-l { fill: none; stroke: #b9d8ee; stroke-width: 2; }
.pb-l2 { fill: #f4f9fd; stroke: #b9d8ee; stroke-width: 2; }

/* Body */
.body { display: flex; height: 804px; flex: none; }
.rail { position: relative; width: 61px; flex: none; background: #f3f2f1; border-right: 1px solid #e1dfdd; display: flex; flex-direction: column; align-items: center; padding-top: 19px; }
.rail-on { position: absolute; left: 0; top: 0; width: 4px; height: 60px; background: #117865; }
.rail-i { width: 22px; height: 22px; margin-bottom: 36px; fill: none; stroke: #555; stroke-width: 1.300; }
.rail-m { width: 28px; height: 28px; margin-bottom: 33px; }
.rail-dax { position: relative; width: 28px; height: 28px; }
.rail-dax .rail-i { width: 28px; height: 28px; margin: 0; }
.rail-dax span { position: absolute; left: -1px; bottom: 0; font: 700 9px "Liberation Sans", sans-serif; color: #555; background: #f3f2f1; }
.center { flex: 1; min-width: 0; display: flex; flex-direction: column; }
.notice { height: 48px; flex: none; background: #f3f3f3; border-bottom: 1px solid #cfcfcf; display: flex; align-items: center; padding: 0 18px 0 22px; }
.info { width: 23px; height: 23px; border-radius: 50%; background: #5f5e5d; color: #fff; font: 700 15px/23px "Liberation Sans", sans-serif; text-align: center; flex: none; }
.notice-t { margin-left: 12px; font-size: 17.500px; letter-spacing: -.25px; white-space: nowrap; color: #323130; }
.view-btn { margin-left: auto; width: 182px; height: 34px; background: #fff; border-radius: 6px; color: #323130; font-size: 17.500px; letter-spacing: -.25px; white-space: nowrap; }
.notice-x { width: 14px; height: 14px; margin-left: 23px; fill: none; stroke: #444; stroke-width: 1.200; }
.work { flex: 1; display: flex; min-height: 0; }
.canvas { flex: 1; background: #fff; padding-left: 76px; min-width: 0; }
.page { position: relative; width: 1335px; height: 703px; background: #4d4d4d; box-shadow: 4px 0 8px rgba(0,0,0,.08); }
.filters { width: 49px; flex: none; background: #fff; border-left: 1px solid #a9a9a9; display: flex; flex-direction: column; align-items: center; padding-top: 14px; }
.filter-ic { width: 18px; height: 18px; margin-left: 2px; fill: none; stroke: #323130; stroke-width: 1.600; }
.vert { writing-mode: vertical-rl; font-weight: 600; white-space: nowrap; font-size: 23px; letter-spacing: -.2px; }
.filters .vert { margin-top: 9px; margin-left: -3px; line-height: 28px; }

/* Visuals on the report canvas */
.visual { position: absolute; background: #fff; display: flex; flex-direction: column; box-shadow: 0 1px 0 #a8a8a8; }
.v-head { left: 26px; top: 0; width: 1279px; height: 79px; align-items: center; }
.v-head h1 { margin: 0; font: 300 51.600px/48px Roboto, sans-serif; color: #252423; white-space: nowrap; padding-top: 1px; }
.v-kpi { left: 25px; top: 119px; width: 295px; height: 219px; }
.v-bmi { left: 334px; top: 110px; width: 334px; height: 219px; }
.v-fun { left: 690px; top: 119px; width: 318px; height: 228px; }
.v-ki { left: 1020px; top: 110px; width: 286px; height: 238px; }
.v-sca { left: 51px; top: 363px; width: 405px; height: 276px; }
.v-pie { left: 480px; top: 363px; width: 449px; height: 264px; }
.v-bar { left: 952px; top: 363px; width: 340px; height: 264px; }
.vtitle { flex: none; padding: 1px 6px 0; font: 400 16px/20px Roboto, sans-serif; letter-spacing: .62px; color: #252423; }
.plot { flex: none; }
.legend { flex: none; height: 18px; margin-top: 11px; padding-left: 6px; display: flex; align-items: center; font-size: 13px; letter-spacing: -.3px; color: #605e5c; }
.legend b { width: 45px; font-weight: 700; }
.li { width: 25px; display: flex; align-items: center; gap: 2px; }
.li i { width: 11px; height: 11px; border-radius: 50%; flex: none; }
.c0 { background: #118dff; } .c1 { background: #12239e; } .c2 { background: #e66c37; } .c3 { background: #6b007b; } .c4 { background: #e044a7; }

.kpi { margin: 6px 0 0 5px; width: 280px; height: 95px; border-left: 2px solid #c8c6c4; padding-left: 11px; display: grid; grid-template-columns: 135px 135px; row-gap: 8px; align-content: start; }
.kv { font-size: 17px; line-height: 22px; color: #252423; letter-spacing: -.2px; }
.kl { font-size: 16.500px; line-height: 22px; color: #605e5c; letter-spacing: -.35px; white-space: nowrap; }

/* Chart text and marks */
.ax { font-family: "Open Sans", sans-serif; font-size: 13.500px; letter-spacing: -.35px; fill: #666; }
.pl { font-size: 13px; letter-spacing: -.4px; }
.axt { font-family: "Open Sans", sans-serif; font-size: 12px; letter-spacing: -.3px; fill: #333; }
.mid { text-anchor: middle; }
.end { text-anchor: end; }
.val { font-family: "Open Sans", sans-serif; font-size: 15.500px; font-weight: 400; letter-spacing: -.3px; fill: #fff; }
.lgt { font-family: "Open Sans", sans-serif; font-size: 14px; font-weight: 700; letter-spacing: -.4px; fill: #605e5c; }
.grid { fill: none; stroke: #d5d5d5; stroke-width: 1; stroke-dasharray: 1 3; }
.ser { fill: none; stroke-width: 3; stroke-linejoin: round; }
.s-b { stroke: #118dff; } .s-o { stroke: #e66c37; } .s-p { stroke: #e044a7; } .s-v { stroke: #6b007b; }
.d0 { fill: #118dff; } .d1 { fill: #12239e; } .d2 { fill: #e66c37; } .d4 { fill: #e044a7; } .d-v { fill: #7a1a8a; }
.brk { fill: none; stroke: #a0a0a0; stroke-width: 1; }
.bar { fill: #118dff; }
.sl-b { fill: #118dff; stroke: #fff; stroke-width: 1; }
.sl-n { fill: #12239e; stroke: #fff; stroke-width: 1; }
.lead { fill: none; stroke: #a8a8a8; stroke-width: 1; }

/* Key influencers */
.ki-tabs { display: flex; gap: 17px; padding: 13px 0 0 18px; flex: none; }
.ki-tab { font-size: 16px; font-weight: 600; line-height: 24px; letter-spacing: -.25px; padding-bottom: 3px; border-bottom: 2px solid transparent; white-space: nowrap; }
.ki-on { border-bottom-color: #118dff; }
.ki-corner { position: absolute; right: 0; top: 21px; width: 7px; height: 8px; border: 1px solid #c8c6c4; border-right: 0; }
.ki-q { display: flex; align-items: center; padding-left: 18px; margin-top: 9px; height: 40px; flex: none; }
.ki-qt { width: 124px; font-size: 14.500px; line-height: 20px; letter-spacing: -.3px; color: #323130; }
.ki-sel { width: 110px; height: 27px; border: 1px solid #e1e1e1; display: flex; align-items: center; justify-content: space-between; padding: 0 5px; font-size: 13px; letter-spacing: -.25px; }
.ki-sel svg { width: 12px; height: 8px; fill: none; stroke: #666; }
.ki-help { margin-left: 12px; font-size: 14px; color: #555; }
.ki-panel { position: relative; margin: 8px 0 0 5px; width: 275px; height: 132px; background: #f3f3f3; padding: 11px 0 0 13px; }
.ki-hdr { display: flex; font-size: 12.500px; line-height: 18px; letter-spacing: -.25px; color: #323130; }
.ki-when { width: 85px; }
.ki-then { width: 140px; }
.ki-row { display: flex; align-items: center; margin-top: 13px; padding-left: 12px; }
.ki-sum { width: 171px; font-size: 13px; letter-spacing: -.25px; color: #a6a6a6; white-space: nowrap; }
.ki-arrow { width: 0; height: 0; border-left: 7px solid #e3e3e3; border-top: 5px solid transparent; border-bottom: 5px solid transparent; margin-right: 1px; }
.ki-bub { width: 50px; height: 50px; border-radius: 50%; background: linear-gradient(#cfcfcf, #e9e9e9 85%, #f3f3f3); text-align: center; font-size: 13px; line-height: 50px; color: #a6a6a6; }
.ki-scroll { position: absolute; right: 1px; top: 12px; width: 8px; height: 38px; background: #c8c6c4; }

/* Page tabs */
.pagetabs { height: 53px; flex: none; background: #f3f2f1; display: flex; border-left: 1px solid #e1dfdd; }
.pv { position: relative; height: 53px; }
.pv-desk { width: 36px; margin-left: 14px; display: flex; justify-content: center; padding-top: 11px; border-bottom: 0; }
.pv-desk::after { content: ""; position: absolute; left: 0; right: 0; bottom: 7px; height: 4px; background: #117865; border-radius: 2px; }
.pv-desk svg { width: 28px; height: 22px; fill: none; stroke: #4a4a4a; stroke-width: 1.500; }
.pv-phone { width: 20px; margin-left: 38px; padding-top: 7px; }
.pv-phone svg { width: 20px; height: 30px; fill: none; stroke: #4a4a4a; stroke-width: 1.500; }
.tri-l, .tri-r { width: 0; height: 0; margin-top: 20px; border-top: 7px solid transparent; border-bottom: 7px solid transparent; }
.tri-l { margin-left: 31px; border-right: 7px solid #c8c6c4; }
.tri-r { margin-left: 26px; border-left: 7px solid #c8c6c4; }
.ptab { background: #fff; display: flex; align-items: center; justify-content: center; font-size: 17px; letter-spacing: -.25px; height: 53px; border-left: 1px solid #c8c6c4; }
.ptab-on { width: 150px; margin-left: 12px; font-weight: 600; border-bottom: 6px solid #117865; padding-top: 6px; }
.ptab-2 { width: 114px; }
.ptab-add { width: 58px; height: 53px; background: #117865; display: flex; align-items: center; justify-content: center; }
.ptab-add svg { width: 16px; height: 16px; fill: none; stroke: #fff; stroke-width: 3.500; }

/* Visualizations pane */
.viz { position: relative; width: 270px; flex: none; background: #f3f2f1; border-left: 1px solid #e1dfdd; border-right: 1px solid #e1dfdd; }
.viz-h { display: flex; align-items: center; justify-content: space-between; padding: 14px 11px 0 12px; height: 46px; font-size: 22.500px; font-weight: 600; letter-spacing: -.3px; }
.viz-h svg { width: 18px; height: 18px; fill: none; stroke: #323130; stroke-width: 1.500; }
.viz-sub { margin-top: 10px; padding-left: 11px; font-size: 16.800px; line-height: 24px; font-weight: 600; letter-spacing: -.2px; color: #323130; }
.viz-tabs { display: flex; align-items: center; margin: 6px 0 0 12px; height: 48px; }
.viz-tab-on { width: 48px; height: 48px; background: #d2d0ce; border-radius: 3px; padding: 6px; }
.viz-tab-on svg { width: 36px; height: 36px; }
.vt-l { stroke: #333; fill: none; }
.vt-g { fill: #117865; stroke: #222; stroke-dasharray: 2 1; }
.viz-fmt { width: 38px; height: 36px; margin-left: 57px; fill: none; stroke: #323130; stroke-width: 1.300; }
.viz-caret { display: block; height: 18px; border-bottom: 1px solid #8a8886; position: relative; }
.viz-caret::after { content: ""; position: absolute; left: 27px; bottom: -7px; width: 17px; height: 17px; transform: rotate(45deg) scale(1); border-left: 1px solid #8a8886; border-top: 1px solid #8a8886; background: #f3f2f1; clip-path: polygon(0 0, 100% 0, 0 100%); }
.viz-grid { display: grid; grid-template-columns: repeat(6, 28px); grid-auto-rows: 28px; gap: 14.330px 14px; padding: 17px 0 0 16px; }
.viz-grid svg { width: 28px; height: 28px; overflow: visible; }
.a { fill: none; stroke: #444; stroke-width: 1.300; }
.a2 { fill: none; stroke: #333; stroke-width: 1.300; }
.l { fill: none; stroke: #444; stroke-width: 1.300; }
.lb { fill: none; stroke: #2f7fc1; stroke-width: 1.300; }
.b { fill: #7ab5ea; stroke: #2f7fc1; stroke-width: 1.300; }
.b2 { fill: #4f9be0; }
.bf { fill: #7ab5ea; }
.bf2 { fill: none; stroke: #7ab5ea; stroke-width: 1.300; }
.w { fill: #fff; stroke: #444; stroke-width: 1.200; }
.g { fill: #b0b0b0; stroke: #555; stroke-width: 1.200; }
.k { fill: #333; }
.kb { fill: #444; }
.wf { fill: #f3f2f1; stroke: #2f7fc1; }
.o { fill: #f0a030; stroke: #d9781f; }
.don { fill: none; stroke: #4f9be0; stroke-width: 6; }
.don-g { fill: none; stroke: #b0b0b0; stroke-width: 6; }
.glb { fill: #e7f0e7; stroke: #888; }
.grn { fill: #2f9a5c; }
.nav { fill: #45a5e0; }
.nav2 { fill: #1f6fc0; }
.tb { font: 400 13px "Open Sans", sans-serif; fill: #2f7fc1; text-anchor: middle; letter-spacing: -.5px; }
.tg { fill: #60b080; stroke: #2f8a50; }
.tr { fill: #f06060; stroke: #d03030; }
.rt { font: 700 24px "Open Sans", sans-serif; fill: #2f7fc1; text-anchor: middle; }
.py { font: 700 24px "Open Sans", sans-serif; fill: #2f7fc1; letter-spacing: -1px; }
.bdot { fill: #4f9be0; stroke: #2f7fc1; }
.gdot { fill: #999; stroke: #666; }
.cb { fill: none; stroke: #2f7fc1; stroke-width: 1.500; }
.pu { fill: none; stroke: #8a3ea5; stroke-width: 1.500; }
.mp { fill: #d9781f; }
.mpd { fill: #d9781f; }
.viz-more { height: 46px; margin-top: 8px; padding-left: 18px; font: 700 17px/22px "Open Sans", sans-serif; letter-spacing: 2.500px; color: #323130; border-bottom: 1px solid #e1dfdd; }
.wells { padding: 0 8px 0 6px; }
.well-l { padding: 14px 0 0 12px; height: 46px; font-size: 17.500px; line-height: 24px; letter-spacing: -.25px; color: #323130; }
.well { height: 41px; border: 1px dashed #c8c6c4; background: #fff; padding-left: 15px; font-size: 17.500px; line-height: 38px; letter-spacing: -.25px; color: #323130; white-space: nowrap; }
.well-h { padding: 17px 0 0 12px; height: 46px; font-size: 17.500px; line-height: 24px; font-weight: 600; letter-spacing: -.25px; color: #3b3a39; }
.keep { display: flex; align-items: center; height: 24px; margin-top: 8px; padding-left: 12px; font-size: 17.500px; letter-spacing: -.25px; color: #323130; }
.toggle { margin-left: auto; margin-right: 23px; width: 48px; height: 24px; background: #117865; border-radius: 12px; color: #fff; display: flex; align-items: center; padding: 0 6px 0 7px; justify-content: space-between; font-size: 14px; }
.toggle i { width: 12px; height: 12px; background: #fff; border-radius: 50%; }
.well-2 { margin-top: 17px; height: 37px; padding-left: 10px; line-height: 34px; font-size: 17.800px; }

/* Data pane */
.datap { width: 52px; flex: none; background: #f3f2f1; display: flex; flex-direction: column; align-items: center; padding-top: 21px; }
.datap svg { width: 18px; height: 18px; fill: none; stroke: #323130; stroke-width: 1.500; margin-left: 0; }
.datap .vert { margin-top: 21px; margin-left: -4px; line-height: 28px; }

/* Status bar */
.status { height: 34px; flex: none; background: #f3f2f1; border-top: 1px solid #e1dfdd; display: flex; align-items: center; justify-content: space-between; padding-left: 6px; font-size: 17.800px; letter-spacing: -.25px; color: #484644; }
.st-right { display: flex; align-items: center; }
.st-sym { font-size: 20px; line-height: 20px; color: #555; width: 12px; }
.slider { position: relative; width: 150px; height: 1px; background: #666; margin: 0 8px; }
.thumb { position: absolute; left: 47px; top: -8px; width: 6px; height: 17px; background: #555; }
.tick { position: absolute; left: 75px; top: -4px; width: 1px; height: 9px; background: #555; }
.st-plus { width: 14px; font-weight: 600; }
.st-zoom { margin-left: 19px; width: 34px; font-size: 17px; color: #605e5c; }
.st-fit { width: 24px; height: 18px; margin-left: 29px; fill: none; }
.fit-o { stroke: #555; stroke-width: 1.500; }
.fit-i { stroke: #555; stroke-width: 1.500; }
.st-up { margin-left: 21px; margin-right: 7px; white-space: nowrap; }
.task-strip { height: 2px; flex: none; background: #2b2b2b; }
```
